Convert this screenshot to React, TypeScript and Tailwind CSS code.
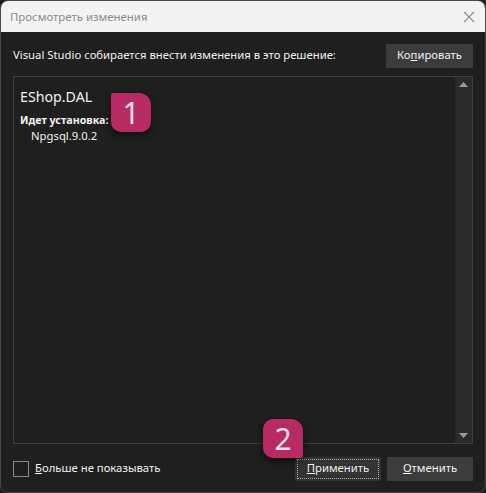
import React from "react";

function Badge({ n, sharp }: { n: string; sharp: "tl" | "br" }) {
  const r = sharp === "tl" ? "rounded-tl-[2px] rounded-tr-[12px] rounded-br-[10px] rounded-bl-[10px]" : "rounded-tl-[10px] rounded-tr-[12px] rounded-bl-[10px] rounded-br-[2px]";
  return (
    <div
      className={`absolute w-[40px] h-[39px] bg-[#b82a63] ${r} flex items-center justify-center text-[#e8e0e4] text-[30px] leading-none shadow-[0_3px_8px_rgba(0,0,0,0.6)]`}
      style={{ fontFamily: '"Noto Sans", sans-serif' }}
    >
      {n}
    </div>
  );
}

export default function App() {
  return (
    <div className="w-[486px] h-[493px] bg-[#1c1c1c] overflow-hidden" style={{ fontFamily: '"Noto Sans", "Open Sans", sans-serif' }}>
      <div className="relative w-[486px] h-[493px] rounded-[8px] border border-[#4a4a4a] overflow-hidden flex flex-col bg-[#1f1f1f]">
        {/* Title bar */}
        <div className="h-[31px] bg-[#f3f3f3] flex items-center justify-between pl-[9px] pr-[8px] shrink-0">
          <span className="text-[11.4px] text-[#8b8b8b]">Просмотреть изменения</span>
          <svg width="14" height="14" viewBox="0 0 14 14" className="mr-[1px]">
            <path d="M2 2 L12 12 M12 2 L2 12" stroke="#8b8b8b" strokeWidth="1.1" />
          </svg>
        </div>
        {/* Body */}
        <div className="flex-1 flex flex-col px-[12px] pt-[11px] pb-[11px]">
          <div className="flex items-center justify-between h-[25px]">
            <span className="text-[11.3px] text-[#f0f0f0]">Visual Studio собирается внести изменения в это решение:</span>
            <div className="w-[87px] h-[24px] bg-[#3c3c3c] flex items-center justify-center text-[11.3px] text-[#f0f0f0]">
              Ко<span className="underline">п</span>ировать
            </div>
          </div>
          <div className="mt-[8px] flex-1 border border-[#3f3f3f] flex">
            <div className="flex-1 px-[6px] pt-[10px] relative">
              <div className="text-[14.2px] text-[#f0f0f0] leading-[20px]">EShop.DAL</div>
              <div className="mt-[5px] text-[10.7px] font-bold text-[#f0f0f0] leading-[16px]">Идет установка:</div>
              <div className="pl-[11px] text-[11.3px] text-[#f0f0f0] leading-[16px]">Npgsql.9.0.2</div>
            </div>
            <div className="w-[17px] bg-[#2a2a2a] flex flex-col justify-between items-center py-[5px]">
              <svg width="9" height="5" viewBox="0 0 9 5"><path d="M0 5 L4.5 0 L9 5 Z" fill="#9a9a9a" /></svg>
              <svg width="9" height="5" viewBox="0 0 9 5"><path d="M0 0 L4.5 5 L9 0 Z" fill="#9a9a9a" /></svg>
            </div>
          </div>
          <div className="mt-[12px] flex items-center justify-between h-[25px]">
            <div className="flex items-center">
              <div className="w-[16px] h-[16px] border border-[#8a8a8a]" />
              <span className="ml-[6px] text-[11.3px] text-[#f0f0f0]">
                <span className="underline">Б</span>ольше не показывать
              </span>
            </div>
            <div className="flex gap-[6px]">
              <div className="w-[86px] h-[24px] bg-[#333333] flex items-center justify-center p-[2px]">
                <div className="w-full h-full border border-dotted border-[#b0b0b0] flex items-center justify-center text-[11.3px] text-[#f0f0f0]">
                  <span className="underline">П</span>рименить
                </div>
              </div>
              <div className="w-[86px] h-[24px] bg-[#3c3c3c] flex items-center justify-center text-[11.3px] text-[#f0f0f0]">
                <span className="underline">О</span>тменить
              </div>
            </div>
          </div>
        </div>
        <div className="absolute left-[110px] top-[92px]"><Badge n="1" sharp="tl" /></div>
        <div className="absolute left-[262px] top-[418px]"><Badge n="2" sharp="br" /></div>
      </div>
    </div>
  );
}
